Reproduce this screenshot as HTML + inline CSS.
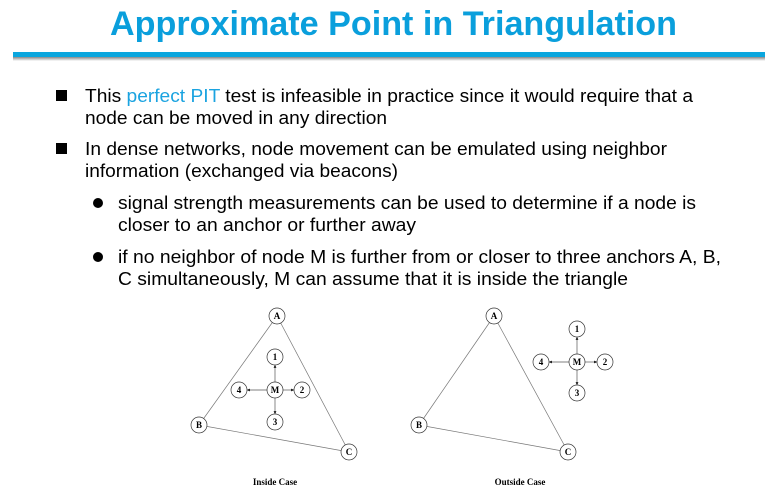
<!DOCTYPE html>
<html><head><meta charset="utf-8"><style>
html,body{margin:0;padding:0;background:#fff;}
svg{display:block}
text{font-family:"Liberation Sans",Arial,sans-serif;}
.b{font-size:18px;fill:#000}
.n{font-family:"Liberation Serif",serif;font-size:9px;font-weight:bold;text-anchor:middle;fill:#000}
</style></head><body>
<svg width="765" height="503" viewBox="0 0 765 503" xmlns="http://www.w3.org/2000/svg">
<defs><linearGradient id="sh" x1="0" y1="0" x2="0" y2="1"><stop offset="0" stop-color="#888"/><stop offset="1" stop-color="#fff"/></linearGradient>
<marker id="ar" viewBox="0 0 6 6" refX="6" refY="3" markerWidth="4" markerHeight="4" orient="auto"><path d="M0,0 L6,3 L0,6 z" fill="#000"/></marker></defs>
<text x="110" y="35" textLength="567" lengthAdjust="spacingAndGlyphs" style="font-size:34px;font-weight:bold;fill:#0a9fdc">Approximate Point in Triangulation</text>
<rect x="13" y="57" width="752" height="4" fill="url(#sh)"/>
<rect x="13" y="52" width="752" height="5" fill="#0aa6de"/>

<rect x="56" y="90" width="11" height="11" fill="#000"/>
<text class="b" x="85" y="102" textLength="608" lengthAdjust="spacingAndGlyphs">This <tspan fill="#1aa3e0">perfect PIT</tspan> test is infeasible in practice since it would require that a</text>
<text class="b" x="85" y="124" textLength="302" lengthAdjust="spacingAndGlyphs">node can be moved in any direction</text>
<rect x="56" y="143" width="11" height="11" fill="#000"/>
<text class="b" x="85" y="155" textLength="582" lengthAdjust="spacingAndGlyphs">In dense networks, node movement can be emulated using neighbor</text>
<text class="b" x="85" y="177" textLength="313" lengthAdjust="spacingAndGlyphs">information (exchanged via beacons)</text>
<circle cx="98" cy="203" r="5" fill="#000"/>
<text class="b" x="118" y="209" textLength="578" lengthAdjust="spacingAndGlyphs">signal strength measurements can be used to determine if a node is</text>
<text class="b" x="118" y="231" textLength="298" lengthAdjust="spacingAndGlyphs">closer to an anchor or further away</text>
<circle cx="98" cy="257" r="5" fill="#000"/>
<text class="b" x="118" y="263" textLength="603" lengthAdjust="spacingAndGlyphs">if no neighbor of node M is further from or closer to three anchors A, B,</text>
<text class="b" x="118" y="285" textLength="510" lengthAdjust="spacingAndGlyphs">C simultaneously, M can assume that it is inside the triangle</text>

<g stroke="#777" stroke-width="0.7" fill="none">
<line x1="277" y1="316" x2="199" y2="425"/><line x1="277" y1="316" x2="349" y2="452"/><line x1="199" y1="425" x2="349" y2="452"/>
<line x1="494" y1="316" x2="419" y2="425"/><line x1="494" y1="316" x2="568" y2="452"/><line x1="419" y1="425" x2="568" y2="452"/>
</g>
<g stroke="#555" stroke-width="0.7" fill="none" marker-end="url(#ar)">
<line x1="275" y1="382" x2="275" y2="365"/><line x1="275" y1="398" x2="275" y2="414"/><line x1="267" y1="390" x2="247" y2="390"/><line x1="283" y1="390" x2="294" y2="390"/>
<line x1="577" y1="354" x2="577" y2="337"/><line x1="577" y1="370" x2="577" y2="385"/><line x1="569" y1="362" x2="549" y2="362"/><line x1="585" y1="362" x2="597" y2="362"/>
</g>
<g fill="#fff" stroke="#333" stroke-width="0.7">
<circle cx="277" cy="316" r="8"/><circle cx="199" cy="425" r="8"/><circle cx="349" cy="452" r="8"/>
<circle cx="275" cy="357" r="8"/><circle cx="275" cy="390" r="8"/><circle cx="239" cy="390" r="8"/><circle cx="302" cy="390" r="8"/><circle cx="275" cy="422" r="8"/>
<circle cx="494" cy="316" r="8"/><circle cx="419" cy="425" r="8"/><circle cx="568" cy="452" r="8"/>
<circle cx="577" cy="329" r="8"/><circle cx="577" cy="362" r="8"/><circle cx="541" cy="362" r="8"/><circle cx="605" cy="362" r="8"/><circle cx="577" cy="393" r="8"/>
</g>
<g>
<text class="n" x="277" y="319">A</text><text class="n" x="199" y="428">B</text><text class="n" x="349" y="455">C</text>
<text class="n" x="275" y="360">1</text><text class="n" x="275" y="393">M</text><text class="n" x="239" y="393">4</text><text class="n" x="302" y="393">2</text><text class="n" x="275" y="425">3</text>
<text class="n" x="494" y="319">A</text><text class="n" x="419" y="428">B</text><text class="n" x="568" y="455">C</text>
<text class="n" x="577" y="332">1</text><text class="n" x="577" y="365">M</text><text class="n" x="541" y="365">4</text><text class="n" x="605" y="365">2</text><text class="n" x="577" y="396">3</text>
</g>
<text class="n" x="275" y="485">Inside Case</text>
<text class="n" x="520" y="485">Outside Case</text>
</svg>
</body></html>
